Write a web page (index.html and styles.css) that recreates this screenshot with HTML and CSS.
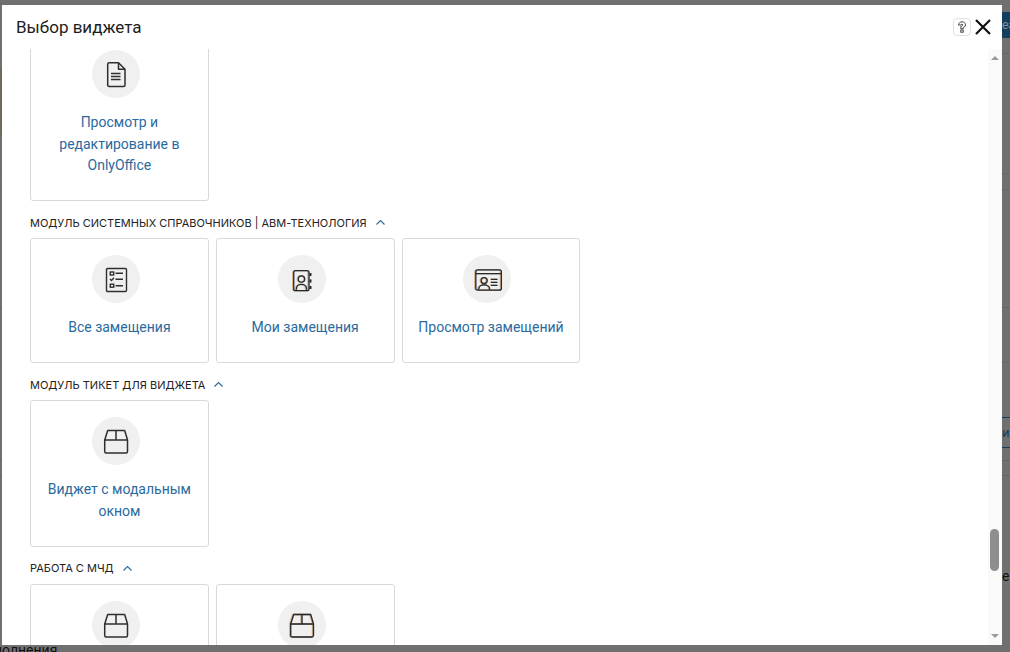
FILE: index.html
```html
<!DOCTYPE html>
<html lang="ru">
<head>
<meta charset="utf-8">
<title>Выбор виджета</title>
<link rel="stylesheet" href="styles.css">
</head>
<body>
<div class="bg-line bl-1"></div>
<div class="bg-line bl-2"></div>
<div class="bg-line bl-3"></div>
<div class="bg-line bl-4"></div>
<div class="bg-line bl-5"></div>
<div class="bg-line bl-6"></div>
<div class="bg-line bl-7"></div>
<div class="bg-peek bg-tan"></div>
<div class="bg-peek bg-navy">еа</div>
<div class="bg-peek bg-tab">ии</div>
<div class="bg-peek bg-char">е</div>
<div class="bg-peek bg-word">полнения</div>
<div class="modal">
  <header class="modal-head">
    <h1 class="modal-title">Выбор виджета</h1>
    <button class="help-btn" aria-label="Справка">
      <svg width="10" height="12" viewBox="0 0 10 12" fill="none" stroke="#333" stroke-width=".9"><path d="M1.500 4C1.500 2 3.200 .8 5 .8S8.500 2 8.500 4c0 1.500-1.100 2-2.300 2.500v1.200H3.800V5.500c1-.4 2-.6 2-1.500 0-.5-.4-.8-.8-.8s-.9.3-.9.8z"/><rect x="3.800" y="9" width="2.400" height="2.200"/></svg>
    </button>
    <button class="close-btn" aria-label="Закрыть">
      <svg width="16" height="16" viewBox="0 0 16 16" fill="none" stroke="#111" stroke-width="2.200"><path d="M1 1l14 14M15 1L1 15"/></svg>
    </button>
  </header>
  <div class="modal-body">
    <div class="scroll-area">
      <div class="scroll-inner">
        <div class="cards">
          <a class="card">
            <span class="icon-circle">
              <svg class="ico" viewBox="0 0 24 24" fill="none" stroke="#2e2e2e" stroke-width="1.500" stroke-linejoin="round"><path d="M5.200 .8h9.300L21 7.300V23a1.500 1.500 0 0 1-1.500 1.500H5.200A1.500 1.500 0 0 1 3.700 23V2.300A1.500 1.500 0 0 1 5.200 .8z"/><path d="M14.500 .8v6.500H21M7 11.500h9.500M7 14.500h9.500M7 17.500h9.500"/></svg>
            </span>
            <span class="card-label">Просмотр и редактирование в OnlyOffice</span>
          </a>
        </div>
        <div class="section-head"><span>Модуль системных справочников | АВМ-Технология</span>
          <svg class="chev" viewBox="0 0 9 5" fill="none" stroke="#2a6a9e" stroke-width="1.100"><path d="M.5 4.500l4-4 4 4"/></svg></div>
        <div class="cards">
          <a class="card">
            <span class="icon-circle">
              <svg class="ico" viewBox="0 0 24 24" fill="none" stroke="#2e2e2e" stroke-width="1.400"><rect x="2.500" y="1.500" width="20" height="23" rx="1"/><rect x="6.300" y="5" width="3.400" height="3"/><path d="M11.500 6.300h7.500M6 12l1.500 1.500L10 10.800M11.500 12.300h7.500M11.500 18.700h7.500"/><rect x="6.300" y="17.200" width="3.400" height="3"/></svg>
            </span>
            <span class="card-label">Все замещения</span>
          </a>
          <a class="card">
            <span class="icon-circle">
              <svg class="ico fringe" viewBox="0 0 24 24" fill="none" stroke="#2a2a2a" stroke-width="1.250"><rect x="3.700" y="3.700" width="15.300" height="20" rx="2"/><circle cx="11.500" cy="12" r="3.200"/><path d="M6.500 22.800v-1.500a5 4 0 0 1 10 0v1.500"/><path d="M20.500 6v3M20.500 12.500v3M20.500 19v3" stroke-width="1.800"/></svg>
            </span>
            <span class="card-label">Мои замещения</span>
          </a>
          <a class="card">
            <span class="icon-circle">
              <svg class="ico fringe" viewBox="0 0 24 24" fill="none" stroke="#2a2a2a" stroke-width="1.250"><rect x=".8" y="2.800" width="25.600" height="20.400" rx="2"/><path d="M.8 6.500h25.600M16 12.300h6.500M16 15.300h6.500M16 18.300h6.500" /><circle cx="9.200" cy="13.500" r="3"/><path d="M3.800 22.800v-1a5.400 4 0 0 1 10.800 0v1"/></svg>
            </span>
            <span class="card-label">Просмотр замещений</span>
          </a>
        </div>
        <div class="section-head"><span>Модуль Тикет для виджета</span>
          <svg class="chev" viewBox="0 0 9 5" fill="none" stroke="#2a6a9e" stroke-width="1.100"><path d="M.5 4.500l4-4 4 4"/></svg></div>
        <div class="cards">
          <a class="card">
            <span class="icon-circle">
              <svg class="ico" viewBox="0 0 24 24" fill="none" stroke="#2e2e2e" stroke-width="1.500" stroke-linejoin="round"><path d="M3.700 1.500h17L23.500 11v11.500A1.500 1.500 0 0 1 22 24H2.200A1.500 1.500 0 0 1 .7 22.500V11z"/><path d="M.7 11h22.800M12 1.500V11"/></svg>
            </span>
            <span class="card-label">Виджет с модальным окном</span>
          </a>
        </div>
        <div class="section-head"><span>Работа с МЧД</span>
          <svg class="chev" viewBox="0 0 9 5" fill="none" stroke="#2a6a9e" stroke-width="1.100"><path d="M.5 4.500l4-4 4 4"/></svg></div>
        <div class="cards">
          <a class="card">
            <span class="icon-circle">
              <svg class="ico" viewBox="0 0 24 24" fill="none" stroke="#2e2e2e" stroke-width="1.500" stroke-linejoin="round"><path d="M3.700 1.500h17L23.500 11v11.500A1.500 1.500 0 0 1 22 24H2.200A1.500 1.500 0 0 1 .7 22.500V11z"/><path d="M.7 11h22.800M12 1.500V11"/></svg>
            </span>
          </a>
          <a class="card">
            <span class="icon-circle">
              <svg class="ico fringe" viewBox="0 0 24 24" fill="none" stroke="#2a2a2a" stroke-width="1.300" stroke-linejoin="round"><path d="M3.700 1.500h17L23.500 11v11.500A1.500 1.500 0 0 1 22 24H2.200A1.500 1.500 0 0 1 .7 22.500V11z"/><path d="M.7 11h22.800M12 1.500V11"/></svg>
            </span>
          </a>
        </div>
      </div>
    </div>
    <div class="scrollbar">
      <span class="sb-arrow sb-up"></span>
      <span class="sb-track"><span class="sb-thumb"></span></span>
      <span class="sb-arrow sb-down"></span>
    </div>
  </div>
</div>
</body>
</html>
```
FILE: styles.css
```css
* { box-sizing: border-box; }
html, body { margin: 0; height: 100%; }
body {
  background: #707070;
  font-family: "Roboto", "Liberation Sans", sans-serif;
  overflow: hidden;
  position: relative;
}
.bg-line { position: absolute; left: 0; right: 0; height: 1px; background: #666; }
.bl-1 { top: 53px; }
.bl-2 { top: 173px; }
.bl-3 { top: 189px; }
.bl-4 { top: 307px; }
.bl-5 { top: 362px; }
.bl-6 { top: 460px; }
.bl-7 { top: 475px; }
.bg-peek { position: absolute; }
.bg-tan { left: 0; top: 68px; width: 2px; height: 67px; background: #6f6a5c; }
.bg-navy { left: 1002px; top: 12px; width: 8px; height: 26px; background: #14405f; color: #8b8f96; font-size: 12px; line-height: 26px; overflow: hidden; }
.bg-tab { left: 1002px; top: 417px; width: 8px; height: 31px; border-top: 1px solid #14405f; border-bottom: 1px solid #14405f; color: #14405f; font-size: 13px; line-height: 29px; overflow: hidden; }
.bg-char { left: 1002px; top: 567px; color: #111; font-size: 14px; line-height: 18px; }
.bg-word { left: -6px; top: 641px; color: #111; font-size: 14px; line-height: 18px; }
.modal {
  position: absolute;
  left: 2px;
  top: 5px;
  width: 1000px;
  height: 640px;
  background: #fff;
  display: flex;
  flex-direction: column;
}
.modal-head {
  flex: none;
  height: 44px;
  display: flex;
  align-items: center;
  padding: 0 11px 0 14px;
}
.modal-title { margin: 0; flex: 1; font-size: 17px; font-weight: 400; color: #1c1c1c; }
.help-btn {
  width: 18px;
  height: 18px;
  padding: 0;
  margin-right: 4px;
  display: flex;
  align-items: center;
  justify-content: center;
  background: #fff;
  border: 1px solid #e0e0e0;
  border-radius: 4px;
}
.close-btn {
  width: 16px;
  height: 16px;
  padding: 0;
  display: flex;
  background: none;
  border: 0;
}
.modal-body { flex: 1; min-height: 0; display: flex; }
.scroll-area { flex: 1; min-width: 0; overflow: hidden; padding: 0 28px; }
.scroll-inner { margin-top: -16px; }
.cards { display: flex; gap: 7px; align-items: flex-start; }
.card {
  width: 178.800px;
  padding: 16px 10px 23.500px;
  display: flex;
  flex-direction: column;
  align-items: center;
  gap: 14px;
  background: #fff;
  border: 1px solid #d9d9d9;
  border-radius: 3px;
}
.icon-circle {
  width: 48px;
  height: 48px;
  margin-right: 7px;
  border-radius: 50%;
  background: #f0f0f0;
  display: flex;
  align-items: center;
  justify-content: center;
}
.ico { width: 24px; height: 24px; display: block; overflow: visible; }
.fringe { filter: drop-shadow(-.5px 0 0 rgba(230, 140, 30, .5)) drop-shadow(.5px 0 0 rgba(30, 100, 220, .4)); }
.card-label {
  font-size: 14px;
  line-height: 21.500px;
  color: #2a6a9e;
  text-align: center;
}
.section-head {
  height: 37px;
  padding-top: 6px;
  display: flex;
  align-items: center;
  gap: 9px;
  font-family: "Inter", "Liberation Sans", sans-serif;
  font-size: 11px;
  color: #222;
  text-transform: uppercase;
}
.chev { width: 9px; height: 5px; display: block; }
.scrollbar {
  flex: none;
  width: 14px;
  padding-right: 1px;
  background: #fafafa;
  display: flex;
  flex-direction: column;
  align-items: center;
}
.sb-arrow { flex: none; width: 0; height: 0; border-left: 4.500px solid transparent; border-right: 4.500px solid transparent; }
.sb-up { margin-top: 7px; border-bottom: 4.500px solid #9a9a9a; }
.sb-down { margin-bottom: 7px; border-top: 4.500px solid #9a9a9a; }
.sb-track { flex: 1; align-self: stretch; padding-top: 468.500px; display: flex; justify-content: center; }
.sb-thumb { width: 9px; height: 42px; background: #8e8e8e; border-radius: 5px; }
```
